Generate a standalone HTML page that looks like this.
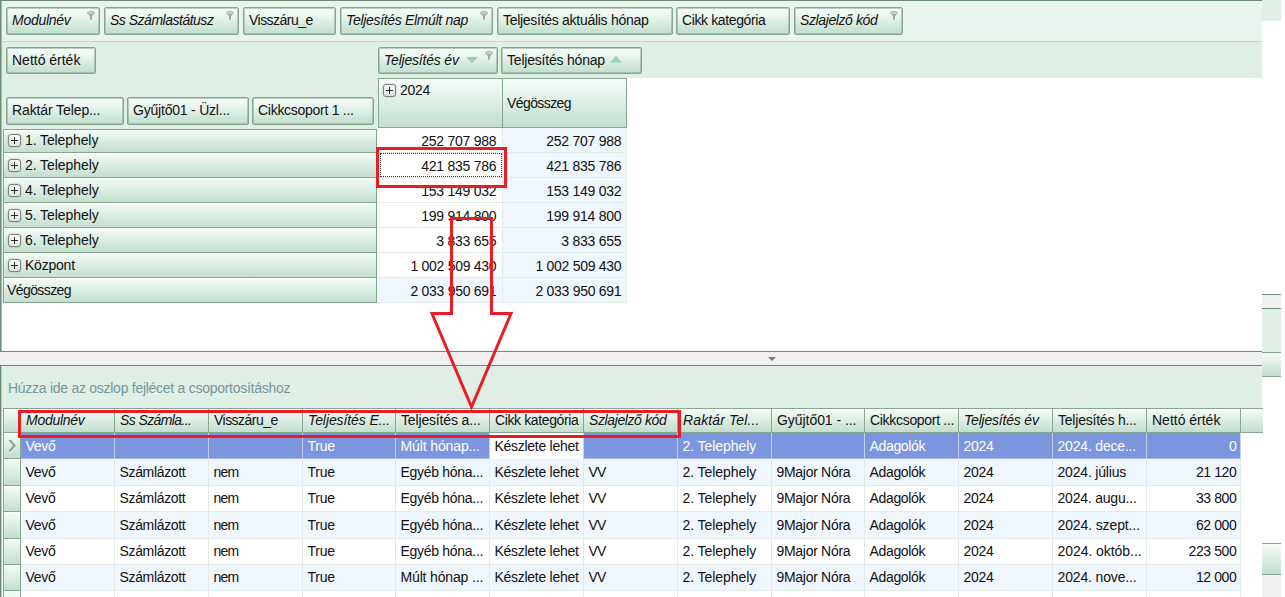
<!DOCTYPE html><html lang="hu"><head><meta charset="utf-8"><title>Pivot</title><style>
*{box-sizing:border-box;margin:0;padding:0}
html,body{width:1285px;height:597px;overflow:hidden;background:#fff}
body{position:relative;font-family:"Liberation Sans",sans-serif;font-size:14px;color:#111;line-height:16px}
.a{position:absolute;white-space:nowrap;overflow:hidden}
.t{position:absolute;white-space:nowrap;height:16px}
.hb{position:absolute;border-radius:2px;border:1px solid #86a692;background:linear-gradient(#fafdfb 0%,#e3f1e9 45%,#cbe4d6 80%,#c3dfcf 100%);box-shadow:inset 0 0 0 1px rgba(125,160,140,.5)}
.i{font-style:italic}
.rh{position:absolute;box-shadow:inset 0 1px 0 rgba(255,255,255,.8);border:1px solid #86a692;background:linear-gradient(#f6fbf8 0%,#dfefe6 45%,#c9e3d4 85%,#c3dfcf 100%)}
.pm{position:absolute;width:13px;height:13px;border:1px solid #7c827e;border-radius:3px;background:linear-gradient(#fbfcfb,#dde2df);box-shadow:0 0 0 .5px rgba(124,130,126,.35)}
.pm:before{content:"";position:absolute;left:2px;top:5px;width:7px;height:1px;background:#2c2f2d}
.pm:after{content:"";position:absolute;left:5px;top:2px;width:1px;height:7px;background:#2c2f2d}
</style></head><body>
<div class="a" style="left:0px;top:0px;width:1262px;height:41px;background:#eaf4ee"></div>
<div class="a" style="left:0px;top:41px;width:1262px;height:1px;background:#bcdccb"></div>
<div class="a" style="left:0px;top:42px;width:1262px;height:36px;background:#dfefe5"></div>
<div class="a" style="left:0px;top:78px;width:378px;height:51px;background:#dfefe5"></div>
<div class="a" style="left:2px;top:129px;width:1px;height:174px;background:#e3ede7"></div>
<div class="a" style="left:0px;top:0px;width:1262px;height:1px;background:#6b8c76"></div>
<div class="a" style="left:0px;top:0px;width:1px;height:352px;background:#6b8c76"></div>
<div class="a" style="left:1px;top:1px;width:1px;height:350px;background:#a5bdae"></div>
<div class="a" style="left:0px;top:351px;width:1262px;height:1px;background:#6b8c76"></div>
<div class="hb" style="left:6px;top:7px;width:94px;height:28px"></div>
<div class="t i" style="top:12px;letter-spacing:-0.277px;left:12px;">Modulnév</div>
<svg class="a" style="left:87px;top:11px" width="8" height="9" viewBox="0 0 8 9"><path d="M0.3 2 L3 5.2 L3 8.8 L5 8.8 L5 5.2 L7.7 2 Z" fill="#a4aba7"/><ellipse cx="4" cy="1.9" rx="3.5" ry="1.45" fill="#d3d8d5" stroke="#a1a8a4" stroke-width=".9"/></svg>
<div class="hb" style="left:104px;top:7px;width:135px;height:28px"></div>
<div class="t i" style="top:12px;letter-spacing:-0.492px;left:110px;">Ss Számlastátusz</div>
<svg class="a" style="left:226px;top:11px" width="8" height="9" viewBox="0 0 8 9"><path d="M0.3 2 L3 5.2 L3 8.8 L5 8.8 L5 5.2 L7.7 2 Z" fill="#a4aba7"/><ellipse cx="4" cy="1.9" rx="3.5" ry="1.45" fill="#d3d8d5" stroke="#a1a8a4" stroke-width=".9"/></svg>
<div class="hb" style="left:243px;top:7px;width:93px;height:28px"></div>
<div class="t" style="top:12px;letter-spacing:-0.530px;left:249px;">Visszáru_e</div>
<div class="hb" style="left:340px;top:7px;width:153px;height:28px"></div>
<div class="t i" style="top:12px;letter-spacing:-0.322px;left:346px;">Teljesítés Elmúlt nap</div>
<svg class="a" style="left:480px;top:11px" width="8" height="9" viewBox="0 0 8 9"><path d="M0.3 2 L3 5.2 L3 8.8 L5 8.8 L5 5.2 L7.7 2 Z" fill="#a4aba7"/><ellipse cx="4" cy="1.9" rx="3.5" ry="1.45" fill="#d3d8d5" stroke="#a1a8a4" stroke-width=".9"/></svg>
<div class="hb" style="left:497px;top:7px;width:176px;height:28px"></div>
<div class="t" style="top:12px;letter-spacing:-0.286px;left:503px;">Teljesítés aktuális hónap</div>
<div class="hb" style="left:676px;top:7px;width:114px;height:28px"></div>
<div class="t" style="top:12px;letter-spacing:-0.380px;left:682px;">Cikk kategória</div>
<div class="hb" style="left:794px;top:7px;width:109px;height:28px"></div>
<div class="t i" style="top:12px;letter-spacing:-0.392px;left:800px;">Szlajelző kód</div>
<svg class="a" style="left:890px;top:11px" width="8" height="9" viewBox="0 0 8 9"><path d="M0.3 2 L3 5.2 L3 8.8 L5 8.8 L5 5.2 L7.7 2 Z" fill="#a4aba7"/><ellipse cx="4" cy="1.9" rx="3.5" ry="1.45" fill="#d3d8d5" stroke="#a1a8a4" stroke-width=".9"/></svg>
<div class="hb" style="left:6px;top:47px;width:90px;height:27px"></div>
<div class="t" style="top:52px;letter-spacing:-0.008px;left:12px;">Nettó érték</div>
<div class="hb" style="left:378px;top:47px;width:120px;height:27px"></div>
<div class="t i" style="top:52px;letter-spacing:-0.200px;left:384px;">Teljesítés év</div>
<svg class="a" style="left:485px;top:51px" width="8" height="9" viewBox="0 0 8 9"><path d="M0.3 2 L3 5.2 L3 8.8 L5 8.8 L5 5.2 L7.7 2 Z" fill="#a4aba7"/><ellipse cx="4" cy="1.9" rx="3.5" ry="1.45" fill="#d3d8d5" stroke="#a1a8a4" stroke-width=".9"/></svg>
<svg class="a" style="left:466px;top:57px" width="12" height="7" viewBox="0 0 12 7"><path d="M0 0 L12 0 L6 6.5 Z" fill="#9bd0b0"/></svg>
<div class="hb" style="left:501px;top:47px;width:141px;height:27px"></div>
<div class="t" style="top:52px;letter-spacing:-0.205px;left:507px;">Teljesítés hónap</div>
<svg class="a" style="left:610px;top:55.6px" width="12" height="7" viewBox="0 0 12 7"><path d="M0 6.5 L12 6.5 L6 0 Z" fill="#9bd0b0"/></svg>
<div class="hb" style="left:6px;top:97px;width:118px;height:28px"></div>
<div class="t" style="top:102px;letter-spacing:-0.107px;left:12px;">Raktár Telep...</div>
<div class="hb" style="left:127px;top:97px;width:122px;height:28px"></div>
<div class="t" style="top:102px;letter-spacing:-0.210px;left:133px;">Gyűjtő01 - Üzl...</div>
<div class="hb" style="left:252px;top:97px;width:122px;height:28px"></div>
<div class="t" style="top:102px;letter-spacing:-0.275px;left:258px;">Cikkcsoport 1 ...</div>
<div class="rh" style="left:378px;top:78px;width:125px;height:50px"></div>
<div class="rh" style="left:502px;top:78px;width:125px;height:50px"></div>
<div class="pm" style="left:383px;top:84px"></div>
<div class="t" style="top:82px;letter-spacing:-0.312px;left:400px;">2024</div>
<div class="t" style="top:95px;letter-spacing:-0.587px;left:507px;">Végösszeg</div>
<div class="rh" style="left:3px;top:129px;width:374px;height:24px"></div>
<div class="pm" style="left:8px;top:134px"></div>
<div class="t" style="top:132px;letter-spacing:-0.098px;left:25px;">1. Telephely</div>
<div class="a" style="left:377px;top:128px;width:1px;height:25px;background:#eef3f0"></div>
<div class="a" style="left:378px;top:128px;width:124px;height:24px;background:#fff"></div>
<div class="a" style="left:503px;top:128px;width:123px;height:24px;background:#f0f6fd"></div>
<div class="a" style="left:378px;top:152px;width:249px;height:1px;background:#e3ebe6"></div>
<div class="a" style="left:502px;top:128px;width:1px;height:25px;background:#e3ebe6"></div>
<div class="a" style="left:626px;top:128px;width:1px;height:25px;background:#e3ebe6"></div>
<div class="t" style="top:133px;letter-spacing:-0.260px;right:788.74px;">252 707 988</div>
<div class="t" style="top:133px;letter-spacing:-0.260px;right:663.74px;">252 707 988</div>
<div class="rh" style="left:3px;top:152px;width:374px;height:26px"></div>
<div class="pm" style="left:8px;top:159px"></div>
<div class="t" style="top:157px;letter-spacing:-0.065px;left:25px;">2. Telephely</div>
<div class="a" style="left:377px;top:153px;width:1px;height:25px;background:#eef3f0"></div>
<div class="a" style="left:378px;top:153px;width:124px;height:24px;background:#fff"></div>
<div class="a" style="left:503px;top:153px;width:123px;height:24px;background:#f0f6fd"></div>
<div class="a" style="left:378px;top:177px;width:249px;height:1px;background:#e3ebe6"></div>
<div class="a" style="left:502px;top:153px;width:1px;height:25px;background:#e3ebe6"></div>
<div class="a" style="left:626px;top:153px;width:1px;height:25px;background:#e3ebe6"></div>
<div class="t" style="top:158px;letter-spacing:-0.260px;right:788.74px;">421 835 786</div>
<div class="t" style="top:158px;letter-spacing:-0.260px;right:663.74px;">421 835 786</div>
<div class="rh" style="left:3px;top:177px;width:374px;height:26px"></div>
<div class="pm" style="left:8px;top:184px"></div>
<div class="t" style="top:182px;letter-spacing:-0.065px;left:25px;">4. Telephely</div>
<div class="a" style="left:377px;top:178px;width:1px;height:25px;background:#eef3f0"></div>
<div class="a" style="left:378px;top:178px;width:124px;height:24px;background:#fff"></div>
<div class="a" style="left:503px;top:178px;width:123px;height:24px;background:#f0f6fd"></div>
<div class="a" style="left:378px;top:202px;width:249px;height:1px;background:#e3ebe6"></div>
<div class="a" style="left:502px;top:178px;width:1px;height:25px;background:#e3ebe6"></div>
<div class="a" style="left:626px;top:178px;width:1px;height:25px;background:#e3ebe6"></div>
<div class="t" style="top:183px;letter-spacing:-0.260px;right:788.74px;">153 149 032</div>
<div class="t" style="top:183px;letter-spacing:-0.260px;right:663.74px;">153 149 032</div>
<div class="rh" style="left:3px;top:202px;width:374px;height:26px"></div>
<div class="pm" style="left:8px;top:209px"></div>
<div class="t" style="top:207px;letter-spacing:-0.065px;left:25px;">5. Telephely</div>
<div class="a" style="left:377px;top:203px;width:1px;height:25px;background:#eef3f0"></div>
<div class="a" style="left:378px;top:203px;width:124px;height:24px;background:#fff"></div>
<div class="a" style="left:503px;top:203px;width:123px;height:24px;background:#f0f6fd"></div>
<div class="a" style="left:378px;top:227px;width:249px;height:1px;background:#e3ebe6"></div>
<div class="a" style="left:502px;top:203px;width:1px;height:25px;background:#e3ebe6"></div>
<div class="a" style="left:626px;top:203px;width:1px;height:25px;background:#e3ebe6"></div>
<div class="t" style="top:208px;letter-spacing:-0.260px;right:788.74px;">199 914 800</div>
<div class="t" style="top:208px;letter-spacing:-0.260px;right:663.74px;">199 914 800</div>
<div class="rh" style="left:3px;top:227px;width:374px;height:26px"></div>
<div class="pm" style="left:8px;top:234px"></div>
<div class="t" style="top:232px;letter-spacing:-0.065px;left:25px;">6. Telephely</div>
<div class="a" style="left:377px;top:228px;width:1px;height:25px;background:#eef3f0"></div>
<div class="a" style="left:378px;top:228px;width:124px;height:24px;background:#fff"></div>
<div class="a" style="left:503px;top:228px;width:123px;height:24px;background:#f0f6fd"></div>
<div class="a" style="left:378px;top:252px;width:249px;height:1px;background:#e3ebe6"></div>
<div class="a" style="left:502px;top:228px;width:1px;height:25px;background:#e3ebe6"></div>
<div class="a" style="left:626px;top:228px;width:1px;height:25px;background:#e3ebe6"></div>
<div class="t" style="top:233px;letter-spacing:-0.265px;right:788.74px;">3 833 655</div>
<div class="t" style="top:233px;letter-spacing:-0.265px;right:663.74px;">3 833 655</div>
<div class="rh" style="left:3px;top:252px;width:374px;height:26px"></div>
<div class="pm" style="left:8px;top:259px"></div>
<div class="t" style="top:257px;letter-spacing:-0.225px;left:25px;">Központ</div>
<div class="a" style="left:377px;top:253px;width:1px;height:25px;background:#eef3f0"></div>
<div class="a" style="left:378px;top:253px;width:124px;height:24px;background:#fff"></div>
<div class="a" style="left:503px;top:253px;width:123px;height:24px;background:#f0f6fd"></div>
<div class="a" style="left:378px;top:277px;width:249px;height:1px;background:#e3ebe6"></div>
<div class="a" style="left:502px;top:253px;width:1px;height:25px;background:#e3ebe6"></div>
<div class="a" style="left:626px;top:253px;width:1px;height:25px;background:#e3ebe6"></div>
<div class="t" style="top:258px;letter-spacing:-0.280px;right:788.72px;">1 002 509 430</div>
<div class="t" style="top:258px;letter-spacing:-0.280px;right:663.72px;">1 002 509 430</div>
<div class="rh" style="left:3px;top:277px;width:374px;height:26px"></div>
<div class="t" style="top:282px;letter-spacing:-0.587px;left:7px;">Végösszeg</div>
<div class="a" style="left:377px;top:278px;width:1px;height:25px;background:#eef3f0"></div>
<div class="a" style="left:378px;top:278px;width:124px;height:24px;background:#f0f6fd"></div>
<div class="a" style="left:503px;top:278px;width:123px;height:24px;background:#f0f6fd"></div>
<div class="a" style="left:378px;top:302px;width:249px;height:1px;background:#e3ebe6"></div>
<div class="a" style="left:502px;top:278px;width:1px;height:25px;background:#e3ebe6"></div>
<div class="a" style="left:626px;top:278px;width:1px;height:25px;background:#e3ebe6"></div>
<div class="t" style="top:283px;letter-spacing:-0.280px;right:788.72px;">2 033 950 691</div>
<div class="t" style="top:283px;letter-spacing:-0.280px;right:663.72px;">2 033 950 691</div>
<div class="a" style="left:380px;top:153px;width:122px;height:24px;border:1px dotted #333"></div>
<div class="a" style="left:0px;top:352px;width:1262px;height:13px;background:#f0f0f0"></div>
<svg class="a" style="left:768px;top:357px" width="8" height="4" viewBox="0 0 8 4"><path d="M0 0 L8 0 L4 4 Z" fill="#7a7a7a"/></svg>
<div class="a" style="left:0px;top:365px;width:1262px;height:43px;background:#dfefe5"></div>
<div class="a" style="left:0px;top:365px;width:1262px;height:1px;background:#6b8c76"></div>
<div class="a" style="left:0px;top:365px;width:1px;height:232px;background:#6b8c76"></div>
<div class="a" style="left:1px;top:366px;width:1px;height:231px;background:#b5cabd"></div>
<div class="t" style="top:380px;letter-spacing:-0.271px;left:8px;color:#76979a;">Húzza ide az oszlop fejlécet a csoportosításhoz</div>
<div class="rh" style="left:3px;top:408px;width:18px;height:25px"></div>
<div class="rh" style="left:20px;top:408px;width:95px;height:25px"></div>
<div class="t i" style="top:412px;letter-spacing:-0.277px;left:26px;">Modulnév</div>
<div class="rh" style="left:114px;top:408px;width:95px;height:25px"></div>
<div class="t i" style="top:412px;letter-spacing:-0.607px;left:120px;">Ss Számla...</div>
<div class="rh" style="left:208px;top:408px;width:95px;height:25px"></div>
<div class="t" style="top:412px;letter-spacing:-0.530px;left:214px;">Visszáru_e</div>
<div class="rh" style="left:302px;top:408px;width:94px;height:25px"></div>
<div class="t i" style="top:412px;letter-spacing:-0.095px;left:308px;">Teljesítés E...</div>
<div class="rh" style="left:395px;top:408px;width:95px;height:25px"></div>
<div class="t" style="top:412px;letter-spacing:-0.154px;left:401px;">Teljesítés a...</div>
<div class="rh" style="left:489px;top:408px;width:95px;height:25px"></div>
<div class="t" style="top:412px;letter-spacing:-0.380px;left:495px;">Cikk kategória</div>
<div class="rh" style="left:583px;top:408px;width:95px;height:25px"></div>
<div class="t i" style="top:412px;letter-spacing:-0.392px;left:589px;">Szlajelző kód</div>
<div class="rh" style="left:677px;top:408px;width:95px;height:25px"></div>
<div class="t i" style="top:412px;letter-spacing:0.118px;left:683px;">Raktár Tel...</div>
<div class="rh" style="left:771px;top:408px;width:94px;height:25px"></div>
<div class="t" style="top:412px;letter-spacing:-0.054px;left:777px;">Gyűjtő01 - ...</div>
<div class="rh" style="left:864px;top:408px;width:95px;height:25px"></div>
<div class="t" style="top:412px;letter-spacing:-0.307px;left:870px;">Cikkcsoport ...</div>
<div class="rh" style="left:958px;top:408px;width:95px;height:25px"></div>
<div class="t i" style="top:412px;letter-spacing:-0.200px;left:964px;">Teljesítés év</div>
<div class="rh" style="left:1052px;top:408px;width:95px;height:25px"></div>
<div class="t" style="top:412px;letter-spacing:-0.214px;left:1058px;">Teljesítés h...</div>
<div class="rh" style="left:1146px;top:408px;width:95px;height:25px"></div>
<div class="t" style="top:412px;letter-spacing:-0.008px;left:1152px;">Nettó érték</div>
<div class="rh" style="left:1240px;top:408px;width:23px;height:25px;border-right:none"></div>
<div class="rh" style="left:3px;top:432px;width:18px;height:27px"></div>
<div class="a" style="left:21px;top:433px;width:1220px;height:25px;background:#7b96de"></div>
<div class="a" style="left:21px;top:458px;width:1220px;height:1px;background:#a9b9e6"></div>
<div class="a" style="left:114px;top:433px;width:1px;height:26px;background:#c3cfee"></div>
<div class="t" style="top:438px;letter-spacing:-0.312px;left:25.5px;color:#fff;">Vevő</div>
<div class="a" style="left:208px;top:433px;width:1px;height:26px;background:#c3cfee"></div>
<div class="a" style="left:302px;top:433px;width:1px;height:26px;background:#c3cfee"></div>
<div class="a" style="left:395px;top:433px;width:1px;height:26px;background:#c3cfee"></div>
<div class="t" style="top:438px;letter-spacing:-0.243px;left:307.5px;color:#fff;">True</div>
<div class="a" style="left:489px;top:433px;width:1px;height:26px;background:#c3cfee"></div>
<div class="t" style="top:438px;letter-spacing:-0.119px;left:400.5px;color:#fff;">Múlt hónap...</div>
<div class="a" style="left:583px;top:433px;width:1px;height:26px;background:#c3cfee"></div>
<div class="a" style="left:490px;top:433px;width:93px;height:26px;background:#fff"></div>
<div class="t" style="top:438px;letter-spacing:-0.275px;left:494.5px;">Készlete lehet</div>
<div class="a" style="left:677px;top:433px;width:1px;height:26px;background:#c3cfee"></div>
<div class="a" style="left:771px;top:433px;width:1px;height:26px;background:#c3cfee"></div>
<div class="t" style="top:438px;letter-spacing:-0.065px;left:682.5px;color:#fff;">2. Telephely</div>
<div class="a" style="left:864px;top:433px;width:1px;height:26px;background:#c3cfee"></div>
<div class="a" style="left:958px;top:433px;width:1px;height:26px;background:#c3cfee"></div>
<div class="t" style="top:438px;letter-spacing:-0.336px;left:869.5px;color:#fff;">Adagolók</div>
<div class="a" style="left:1052px;top:433px;width:1px;height:26px;background:#c3cfee"></div>
<div class="t" style="top:438px;letter-spacing:-0.312px;left:963.5px;color:#fff;">2024</div>
<div class="a" style="left:1146px;top:433px;width:1px;height:26px;background:#c3cfee"></div>
<div class="t" style="top:438px;letter-spacing:-0.189px;left:1057.5px;color:#fff;">2024. dece...</div>
<div class="a" style="left:1240px;top:433px;width:1px;height:26px;background:#c3cfee"></div>
<div class="t" style="top:438px;letter-spacing:-0.330px;right:48.67px;color:#fff;">0</div>
<div class="rh" style="left:3px;top:458px;width:18px;height:28px"></div>
<div class="a" style="left:21px;top:459px;width:1220px;height:26px;background:#f0f6fd"></div>
<div class="a" style="left:21px;top:485px;width:1220px;height:1px;background:#e3ebe6"></div>
<div class="a" style="left:114px;top:459px;width:1px;height:27px;background:#e3ebe6"></div>
<div class="t" style="top:464px;letter-spacing:-0.312px;left:25.5px;">Vevő</div>
<div class="a" style="left:208px;top:459px;width:1px;height:27px;background:#e3ebe6"></div>
<div class="t" style="top:464px;letter-spacing:-0.335px;left:119.5px;">Számlázott</div>
<div class="a" style="left:302px;top:459px;width:1px;height:27px;background:#e3ebe6"></div>
<div class="t" style="top:464px;letter-spacing:-0.800px;left:213.5px;">nem</div>
<div class="a" style="left:395px;top:459px;width:1px;height:27px;background:#e3ebe6"></div>
<div class="t" style="top:464px;letter-spacing:-0.243px;left:307.5px;">True</div>
<div class="a" style="left:489px;top:459px;width:1px;height:27px;background:#e3ebe6"></div>
<div class="t" style="top:464px;letter-spacing:-0.286px;left:400.5px;">Egyéb hóna...</div>
<div class="a" style="left:583px;top:459px;width:1px;height:27px;background:#e3ebe6"></div>
<div class="t" style="top:464px;letter-spacing:-0.275px;left:494.5px;">Készlete lehet</div>
<div class="a" style="left:677px;top:459px;width:1px;height:27px;background:#e3ebe6"></div>
<div class="t" style="top:464px;letter-spacing:-0.800px;left:588.5px;">VV</div>
<div class="a" style="left:771px;top:459px;width:1px;height:27px;background:#e3ebe6"></div>
<div class="t" style="top:464px;letter-spacing:-0.065px;left:682.5px;">2. Telephely</div>
<div class="a" style="left:864px;top:459px;width:1px;height:27px;background:#e3ebe6"></div>
<div class="t" style="top:464px;letter-spacing:-0.294px;left:776.5px;">9Major Nóra</div>
<div class="a" style="left:958px;top:459px;width:1px;height:27px;background:#e3ebe6"></div>
<div class="t" style="top:464px;letter-spacing:-0.336px;left:869.5px;">Adagolók</div>
<div class="a" style="left:1052px;top:459px;width:1px;height:27px;background:#e3ebe6"></div>
<div class="t" style="top:464px;letter-spacing:-0.312px;left:963.5px;">2024</div>
<div class="a" style="left:1146px;top:459px;width:1px;height:27px;background:#e3ebe6"></div>
<div class="t" style="top:464px;letter-spacing:-0.186px;left:1057.5px;">2024. július</div>
<div class="a" style="left:1240px;top:459px;width:1px;height:27px;background:#e3ebe6"></div>
<div class="t" style="top:464px;letter-spacing:-0.387px;right:48.61px;">21 120</div>
<div class="rh" style="left:3px;top:485px;width:18px;height:27px"></div>
<div class="a" style="left:21px;top:486px;width:1220px;height:25px;background:#fff"></div>
<div class="a" style="left:21px;top:511px;width:1220px;height:1px;background:#e3ebe6"></div>
<div class="a" style="left:114px;top:486px;width:1px;height:26px;background:#e3ebe6"></div>
<div class="t" style="top:490px;letter-spacing:-0.312px;left:25.5px;">Vevő</div>
<div class="a" style="left:208px;top:486px;width:1px;height:26px;background:#e3ebe6"></div>
<div class="t" style="top:490px;letter-spacing:-0.335px;left:119.5px;">Számlázott</div>
<div class="a" style="left:302px;top:486px;width:1px;height:26px;background:#e3ebe6"></div>
<div class="t" style="top:490px;letter-spacing:-0.800px;left:213.5px;">nem</div>
<div class="a" style="left:395px;top:486px;width:1px;height:26px;background:#e3ebe6"></div>
<div class="t" style="top:490px;letter-spacing:-0.243px;left:307.5px;">True</div>
<div class="a" style="left:489px;top:486px;width:1px;height:26px;background:#e3ebe6"></div>
<div class="t" style="top:490px;letter-spacing:-0.286px;left:400.5px;">Egyéb hóna...</div>
<div class="a" style="left:583px;top:486px;width:1px;height:26px;background:#e3ebe6"></div>
<div class="t" style="top:490px;letter-spacing:-0.275px;left:494.5px;">Készlete lehet</div>
<div class="a" style="left:677px;top:486px;width:1px;height:26px;background:#e3ebe6"></div>
<div class="t" style="top:490px;letter-spacing:-0.800px;left:588.5px;">VV</div>
<div class="a" style="left:771px;top:486px;width:1px;height:26px;background:#e3ebe6"></div>
<div class="t" style="top:490px;letter-spacing:-0.065px;left:682.5px;">2. Telephely</div>
<div class="a" style="left:864px;top:486px;width:1px;height:26px;background:#e3ebe6"></div>
<div class="t" style="top:490px;letter-spacing:-0.294px;left:776.5px;">9Major Nóra</div>
<div class="a" style="left:958px;top:486px;width:1px;height:26px;background:#e3ebe6"></div>
<div class="t" style="top:490px;letter-spacing:-0.336px;left:869.5px;">Adagolók</div>
<div class="a" style="left:1052px;top:486px;width:1px;height:26px;background:#e3ebe6"></div>
<div class="t" style="top:490px;letter-spacing:-0.312px;left:963.5px;">2024</div>
<div class="a" style="left:1146px;top:486px;width:1px;height:26px;background:#e3ebe6"></div>
<div class="t" style="top:490px;letter-spacing:-0.203px;left:1057.5px;">2024. augu...</div>
<div class="a" style="left:1240px;top:486px;width:1px;height:26px;background:#e3ebe6"></div>
<div class="t" style="top:490px;letter-spacing:-0.387px;right:48.61px;">33 800</div>
<div class="rh" style="left:3px;top:511px;width:18px;height:28px"></div>
<div class="a" style="left:21px;top:512px;width:1220px;height:26px;background:#f0f6fd"></div>
<div class="a" style="left:21px;top:538px;width:1220px;height:1px;background:#e3ebe6"></div>
<div class="a" style="left:114px;top:512px;width:1px;height:27px;background:#e3ebe6"></div>
<div class="t" style="top:517px;letter-spacing:-0.312px;left:25.5px;">Vevő</div>
<div class="a" style="left:208px;top:512px;width:1px;height:27px;background:#e3ebe6"></div>
<div class="t" style="top:517px;letter-spacing:-0.335px;left:119.5px;">Számlázott</div>
<div class="a" style="left:302px;top:512px;width:1px;height:27px;background:#e3ebe6"></div>
<div class="t" style="top:517px;letter-spacing:-0.800px;left:213.5px;">nem</div>
<div class="a" style="left:395px;top:512px;width:1px;height:27px;background:#e3ebe6"></div>
<div class="t" style="top:517px;letter-spacing:-0.243px;left:307.5px;">True</div>
<div class="a" style="left:489px;top:512px;width:1px;height:27px;background:#e3ebe6"></div>
<div class="t" style="top:517px;letter-spacing:-0.286px;left:400.5px;">Egyéb hóna...</div>
<div class="a" style="left:583px;top:512px;width:1px;height:27px;background:#e3ebe6"></div>
<div class="t" style="top:517px;letter-spacing:-0.275px;left:494.5px;">Készlete lehet</div>
<div class="a" style="left:677px;top:512px;width:1px;height:27px;background:#e3ebe6"></div>
<div class="t" style="top:517px;letter-spacing:-0.800px;left:588.5px;">VV</div>
<div class="a" style="left:771px;top:512px;width:1px;height:27px;background:#e3ebe6"></div>
<div class="t" style="top:517px;letter-spacing:-0.065px;left:682.5px;">2. Telephely</div>
<div class="a" style="left:864px;top:512px;width:1px;height:27px;background:#e3ebe6"></div>
<div class="t" style="top:517px;letter-spacing:-0.294px;left:776.5px;">9Major Nóra</div>
<div class="a" style="left:958px;top:512px;width:1px;height:27px;background:#e3ebe6"></div>
<div class="t" style="top:517px;letter-spacing:-0.336px;left:869.5px;">Adagolók</div>
<div class="a" style="left:1052px;top:512px;width:1px;height:27px;background:#e3ebe6"></div>
<div class="t" style="top:517px;letter-spacing:-0.312px;left:963.5px;">2024</div>
<div class="a" style="left:1146px;top:512px;width:1px;height:27px;background:#e3ebe6"></div>
<div class="t" style="top:517px;letter-spacing:-0.118px;left:1057.5px;">2024. szept...</div>
<div class="a" style="left:1240px;top:512px;width:1px;height:27px;background:#e3ebe6"></div>
<div class="t" style="top:517px;letter-spacing:-0.387px;right:48.61px;">62 000</div>
<div class="rh" style="left:3px;top:538px;width:18px;height:27px"></div>
<div class="a" style="left:21px;top:539px;width:1220px;height:25px;background:#fff"></div>
<div class="a" style="left:21px;top:564px;width:1220px;height:1px;background:#e3ebe6"></div>
<div class="a" style="left:114px;top:539px;width:1px;height:26px;background:#e3ebe6"></div>
<div class="t" style="top:543px;letter-spacing:-0.312px;left:25.5px;">Vevő</div>
<div class="a" style="left:208px;top:539px;width:1px;height:26px;background:#e3ebe6"></div>
<div class="t" style="top:543px;letter-spacing:-0.335px;left:119.5px;">Számlázott</div>
<div class="a" style="left:302px;top:539px;width:1px;height:26px;background:#e3ebe6"></div>
<div class="t" style="top:543px;letter-spacing:-0.800px;left:213.5px;">nem</div>
<div class="a" style="left:395px;top:539px;width:1px;height:26px;background:#e3ebe6"></div>
<div class="t" style="top:543px;letter-spacing:-0.243px;left:307.5px;">True</div>
<div class="a" style="left:489px;top:539px;width:1px;height:26px;background:#e3ebe6"></div>
<div class="t" style="top:543px;letter-spacing:-0.286px;left:400.5px;">Egyéb hóna...</div>
<div class="a" style="left:583px;top:539px;width:1px;height:26px;background:#e3ebe6"></div>
<div class="t" style="top:543px;letter-spacing:-0.275px;left:494.5px;">Készlete lehet</div>
<div class="a" style="left:677px;top:539px;width:1px;height:26px;background:#e3ebe6"></div>
<div class="t" style="top:543px;letter-spacing:-0.800px;left:588.5px;">VV</div>
<div class="a" style="left:771px;top:539px;width:1px;height:26px;background:#e3ebe6"></div>
<div class="t" style="top:543px;letter-spacing:-0.065px;left:682.5px;">2. Telephely</div>
<div class="a" style="left:864px;top:539px;width:1px;height:26px;background:#e3ebe6"></div>
<div class="t" style="top:543px;letter-spacing:-0.294px;left:776.5px;">9Major Nóra</div>
<div class="a" style="left:958px;top:539px;width:1px;height:26px;background:#e3ebe6"></div>
<div class="t" style="top:543px;letter-spacing:-0.336px;left:869.5px;">Adagolók</div>
<div class="a" style="left:1052px;top:539px;width:1px;height:26px;background:#e3ebe6"></div>
<div class="t" style="top:543px;letter-spacing:-0.312px;left:963.5px;">2024</div>
<div class="a" style="left:1146px;top:539px;width:1px;height:26px;background:#e3ebe6"></div>
<div class="t" style="top:543px;letter-spacing:-0.054px;left:1057.5px;">2024. októb...</div>
<div class="a" style="left:1240px;top:539px;width:1px;height:26px;background:#e3ebe6"></div>
<div class="t" style="top:543px;letter-spacing:-0.401px;right:48.60px;">223 500</div>
<div class="rh" style="left:3px;top:564px;width:18px;height:27px"></div>
<div class="a" style="left:21px;top:565px;width:1220px;height:25px;background:#f0f6fd"></div>
<div class="a" style="left:21px;top:590px;width:1220px;height:1px;background:#e3ebe6"></div>
<div class="a" style="left:114px;top:565px;width:1px;height:26px;background:#e3ebe6"></div>
<div class="t" style="top:569px;letter-spacing:-0.312px;left:25.5px;">Vevő</div>
<div class="a" style="left:208px;top:565px;width:1px;height:26px;background:#e3ebe6"></div>
<div class="t" style="top:569px;letter-spacing:-0.335px;left:119.5px;">Számlázott</div>
<div class="a" style="left:302px;top:565px;width:1px;height:26px;background:#e3ebe6"></div>
<div class="t" style="top:569px;letter-spacing:-0.800px;left:213.5px;">nem</div>
<div class="a" style="left:395px;top:565px;width:1px;height:26px;background:#e3ebe6"></div>
<div class="t" style="top:569px;letter-spacing:-0.243px;left:307.5px;">True</div>
<div class="a" style="left:489px;top:565px;width:1px;height:26px;background:#e3ebe6"></div>
<div class="t" style="top:569px;letter-spacing:-0.153px;left:400.5px;">Múlt hónap ...</div>
<div class="a" style="left:583px;top:565px;width:1px;height:26px;background:#e3ebe6"></div>
<div class="t" style="top:569px;letter-spacing:-0.275px;left:494.5px;">Készlete lehet</div>
<div class="a" style="left:677px;top:565px;width:1px;height:26px;background:#e3ebe6"></div>
<div class="t" style="top:569px;letter-spacing:-0.800px;left:588.5px;">VV</div>
<div class="a" style="left:771px;top:565px;width:1px;height:26px;background:#e3ebe6"></div>
<div class="t" style="top:569px;letter-spacing:-0.065px;left:682.5px;">2. Telephely</div>
<div class="a" style="left:864px;top:565px;width:1px;height:26px;background:#e3ebe6"></div>
<div class="t" style="top:569px;letter-spacing:-0.294px;left:776.5px;">9Major Nóra</div>
<div class="a" style="left:958px;top:565px;width:1px;height:26px;background:#e3ebe6"></div>
<div class="t" style="top:569px;letter-spacing:-0.336px;left:869.5px;">Adagolók</div>
<div class="a" style="left:1052px;top:565px;width:1px;height:26px;background:#e3ebe6"></div>
<div class="t" style="top:569px;letter-spacing:-0.312px;left:963.5px;">2024</div>
<div class="a" style="left:1146px;top:565px;width:1px;height:26px;background:#e3ebe6"></div>
<div class="t" style="top:569px;letter-spacing:-0.143px;left:1057.5px;">2024. nove...</div>
<div class="a" style="left:1240px;top:565px;width:1px;height:26px;background:#e3ebe6"></div>
<div class="t" style="top:569px;letter-spacing:-0.387px;right:48.61px;">12 000</div>
<div class="rh" style="left:3px;top:590px;width:18px;height:28px"></div>
<div class="a" style="left:21px;top:591px;width:1220px;height:26px;background:#fff"></div>
<div class="a" style="left:21px;top:617px;width:1220px;height:1px;background:#e3ebe6"></div>
<div class="a" style="left:114px;top:591px;width:1px;height:27px;background:#e3ebe6"></div>
<div class="a" style="left:208px;top:591px;width:1px;height:27px;background:#e3ebe6"></div>
<div class="a" style="left:302px;top:591px;width:1px;height:27px;background:#e3ebe6"></div>
<div class="a" style="left:395px;top:591px;width:1px;height:27px;background:#e3ebe6"></div>
<div class="a" style="left:489px;top:591px;width:1px;height:27px;background:#e3ebe6"></div>
<div class="a" style="left:583px;top:591px;width:1px;height:27px;background:#e3ebe6"></div>
<div class="a" style="left:677px;top:591px;width:1px;height:27px;background:#e3ebe6"></div>
<div class="a" style="left:771px;top:591px;width:1px;height:27px;background:#e3ebe6"></div>
<div class="a" style="left:864px;top:591px;width:1px;height:27px;background:#e3ebe6"></div>
<div class="a" style="left:958px;top:591px;width:1px;height:27px;background:#e3ebe6"></div>
<div class="a" style="left:1052px;top:591px;width:1px;height:27px;background:#e3ebe6"></div>
<div class="a" style="left:1146px;top:591px;width:1px;height:27px;background:#e3ebe6"></div>
<div class="a" style="left:1240px;top:591px;width:1px;height:27px;background:#e3ebe6"></div>
<svg class="a" style="left:8px;top:440px" width="9" height="11" viewBox="0 0 9 11"><path d="M0.5 0 L3 0 L8 5.5 L3 11 L0.5 11 L5 5.5 Z" fill="#7fa98f"/></svg>
<div class="a" style="left:376px;top:147px;width:131px;height:41px;border:3px solid #ed1c24"></div>
<div class="a" style="left:18px;top:410px;width:663px;height:28px;border:3px solid #ed1c24"></div>
<svg class="a" style="left:420px;top:210px" width="110" height="210" viewBox="420 210 110 210"><path d="M451.5 218.5 L491.5 218.5 L491.5 313.5 L511 313.5 L471.5 407 L432 313.5 L451.5 313.5 Z" fill="none" stroke="#ed1c24" stroke-width="3" stroke-linejoin="miter"/></svg>
<div class="a" style="left:1262px;top:0px;width:19px;height:21px;background:#dfefe5"></div>
<div class="a" style="left:1262px;top:294px;width:19px;height:1px;background:#6b8c76"></div>
<div class="a" style="left:1262px;top:295px;width:19px;height:13px;background:#f0f0f0"></div>
<div class="a" style="left:1262px;top:308px;width:19px;height:1px;background:#6b8c76"></div>
<div class="a" style="left:1262px;top:309px;width:19px;height:43px;background:#dfefe5"></div>
<div class="a" style="left:1262px;top:352px;width:19px;height:25px;border-top:1px solid #86a692;border-bottom:1px solid #86a692;background:linear-gradient(#f6fbf8 0%,#dfefe6 45%,#c9e3d4 85%,#c3dfcf 100%)"></div>
<div class="a" style="left:1262px;top:543px;width:19px;height:32px;border-top:1px solid #86a692;border-bottom:1px solid #86a692;background:linear-gradient(#f6fbf8 0%,#dfefe6 45%,#c9e3d4 85%,#c3dfcf 100%)"></div>
<div class="a" style="left:1262px;top:575px;width:19px;height:22px;background:#f0f0f0"></div>
</body></html>
